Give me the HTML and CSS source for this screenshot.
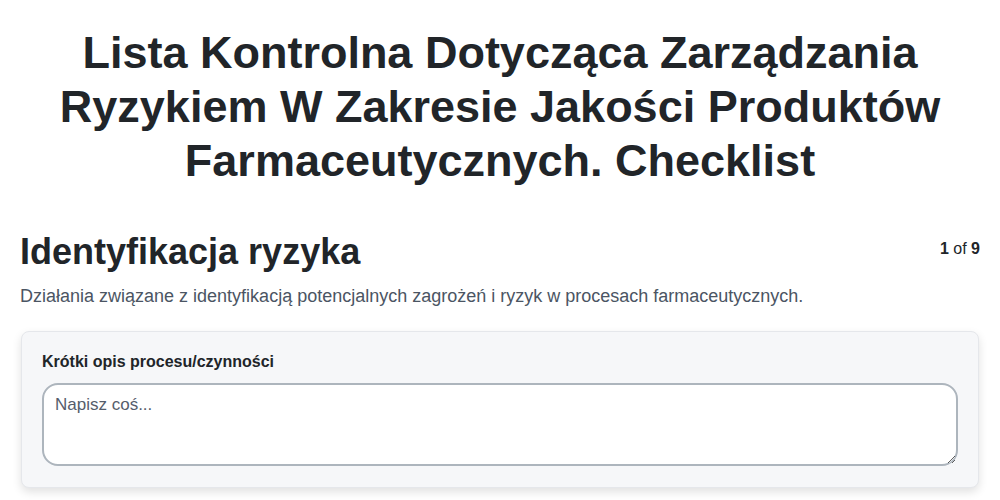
FILE: index.html
```html
<!DOCTYPE html>
<html lang="pl">
<head>
    <meta charset="UTF-8">
    <meta name="viewport" content="width=device-width, initial-scale=1.0">
    <title>Checklist</title>
    <link rel="stylesheet" href="styles.css">
</head>
<body>
    <div class="page">
        <h1 class="doc-title">Lista Kontrolna Dotycząca Zarządzania Ryzykiem W Zakresie Jakości Produktów Farmaceutycznych. Checklist</h1>

        <div class="section-head">
            <h2 class="section-title">Identyfikacja ryzyka</h2>
            <div class="step"><b>1</b> of <b>9</b></div>
        </div>
        <p class="section-desc">Działania związane z identyfikacją potencjalnych zagrożeń i ryzyk w procesach farmaceutycznych.</p>

        <div class="card">
            <label class="field-label" for="opis">Krótki opis procesu/czynności</label>
            <textarea id="opis" class="field-input" placeholder="Napisz coś..."></textarea>
        </div>
    </div>
</body>
</html>
```

FILE: styles.css
```css
* {
    margin: 0;
    padding: 0;
    box-sizing: border-box;
}

body {
    font-family: "Liberation Sans", Arial, sans-serif;
    color: #212529;
    background: #fff;
}

.page {
    padding: 26px 20px 20px;
}

.doc-title {
    font-size: 45px;
    font-weight: 700;
    line-height: 54px;
    text-align: center;
    padding: 0 10px;
    margin-bottom: 42px;
}

.section-head {
    display: flex;
    justify-content: space-between;
    align-items: flex-start;
}

.section-title {
    font-size: 36px;
    font-weight: 700;
    line-height: 44px;
}

.step {
    font-size: 16px;
    padding-top: 10px;
}

.section-desc {
    font-size: 18px;
    color: #4b5563;
    margin-top: 12px;
    margin-bottom: 24px;
}

.card {
    margin: 0 1px;
    background: #f6f7f9;
    border: 1px solid #e5e7eb;
    border-radius: 8px;
    box-shadow: 0 4px 10px rgba(0, 0, 0, 0.12);
    padding: 21px 20px 21px;
    display: flex;
    flex-direction: column;
    gap: 12px;
}

.field-label {
    font-size: 16px;
    font-weight: 700;
}

.field-input {
    font-family: inherit;
    font-size: 17px;
    color: #212529;
    height: 83px;
    padding: 10px 11px;
    border: 2px solid #adb5bd;
    border-radius: 16px;
    background: #fff;
}

.field-input::placeholder {
    color: #555d6b;
}
```
